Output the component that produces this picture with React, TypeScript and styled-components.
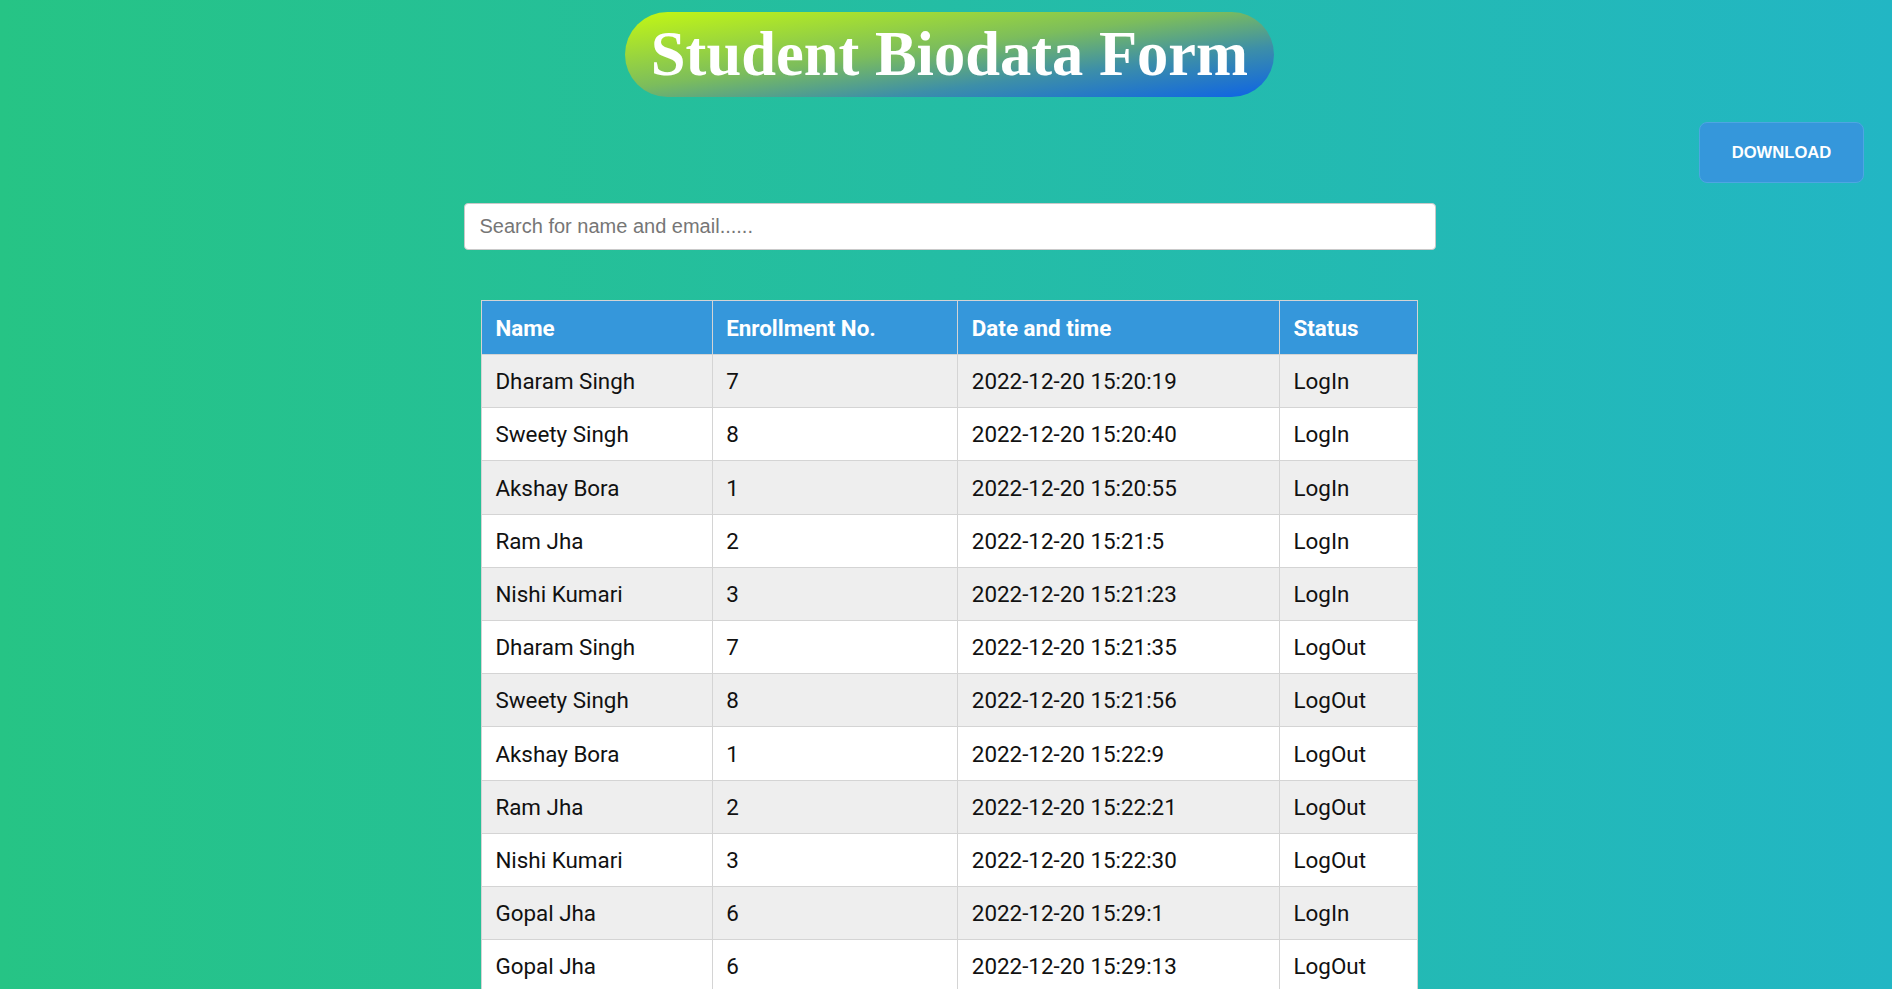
import React from "react";
import styled, { createGlobalStyle } from "styled-components";

const GlobalStyle = createGlobalStyle`
  html, body {
    margin: 0;
    padding: 0;
  }
  body {
    min-height: 100vh;
    background: linear-gradient(to right, #26c485, #22b6c4);
    font-family: Roboto, "Liberation Sans", sans-serif;
  }
`;

const Page = styled.div`
  display: flex;
  flex-direction: column;
  align-items: stretch;
  padding: 12px 0 40px 7px;
`;

const TitleRow = styled.header`
  display: flex;
  justify-content: center;
`;

const Title = styled.h1`
  margin: 0;
  height: 85px;
  padding: 0 26px;
  border-radius: 43px;
  background: linear-gradient(to bottom right, #c4f812, #7cbd5c 45%, #3d8fa8 70%, #0d63e6);
  color: #ffffff;
  font-family: "Liberation Serif", "Times New Roman", serif;
  font-weight: 700;
  font-size: 62.5px;
  line-height: 85px;
  white-space: nowrap;
`;

const ActionRow = styled.div`
  display: flex;
  justify-content: flex-end;
  padding-right: 28px;
  margin-top: 25px;
`;

const DownloadButton = styled.button`
  width: 165px;
  height: 61px;
  border: 1px solid #4ea6e2;
  border-radius: 8px;
  background: #3597db;
  color: #ffffff;
  font-family: "Liberation Sans", Arial, sans-serif;
  font-weight: 700;
  font-size: 16.6px;
  cursor: pointer;
`;

const SearchRow = styled.div`
  display: flex;
  justify-content: center;
  margin-top: 20px;
`;

const SearchInput = styled.input`
  box-sizing: border-box;
  width: 972px;
  height: 47px;
  padding: 0 15px;
  border: 1px solid #c9c9c9;
  border-radius: 4px;
  background: #ffffff;
  font-family: "Liberation Sans", Arial, sans-serif;
  font-size: 20px;
  color: #222;
  outline: none;
  &::placeholder {
    color: #767676;
  }
`;

const TableWrap = styled.div`
  display: flex;
  justify-content: center;
  margin-top: 50px;
`;

const Table = styled.table`
  width: 937px;
  border-collapse: collapse;
  border: 1px solid #d4d4d4;
  font-family: Roboto, "Liberation Sans", sans-serif;
  font-size: 22.4px;
`;

const HeadCell = styled.th<{ $w: number }>`
  width: ${(p) => p.$w}px;
  box-sizing: border-box;
  height: 54px;
  padding: 0 13.4px;
  background: #3597db;
  color: #ffffff;
  font-weight: 700;
  text-align: left;
  border: 1px solid #d4d4d4;
  line-height: 26px;
`;

const Row = styled.tr`
  background: #ffffff;
  &:nth-child(odd) {
    background: #eeeeee;
  }
`;

const Cell = styled.td`
  padding: 13.2px 13.4px 13px;
  line-height: 26px;
  color: #111111;
  border: 1px solid #d4d4d4;
  text-align: left;
  white-space: nowrap;
`;

type Entry = { name: string; no: number; time: string; status: string };

const entries: Entry[] = [
  { name: "Dharam Singh", no: 7, time: "2022-12-20 15:20:19", status: "LogIn" },
  { name: "Sweety Singh", no: 8, time: "2022-12-20 15:20:40", status: "LogIn" },
  { name: "Akshay Bora", no: 1, time: "2022-12-20 15:20:55", status: "LogIn" },
  { name: "Ram Jha", no: 2, time: "2022-12-20 15:21:5", status: "LogIn" },
  { name: "Nishi Kumari", no: 3, time: "2022-12-20 15:21:23", status: "LogIn" },
  { name: "Dharam Singh", no: 7, time: "2022-12-20 15:21:35", status: "LogOut" },
  { name: "Sweety Singh", no: 8, time: "2022-12-20 15:21:56", status: "LogOut" },
  { name: "Akshay Bora", no: 1, time: "2022-12-20 15:22:9", status: "LogOut" },
  { name: "Ram Jha", no: 2, time: "2022-12-20 15:22:21", status: "LogOut" },
  { name: "Nishi Kumari", no: 3, time: "2022-12-20 15:22:30", status: "LogOut" },
  { name: "Gopal Jha", no: 6, time: "2022-12-20 15:29:1", status: "LogIn" },
  { name: "Gopal Jha", no: 6, time: "2022-12-20 15:29:13", status: "LogOut" },
];

export default function App() {
  return (
    <>
      <GlobalStyle />
      <Page>
        <TitleRow>
          <Title>Student Biodata Form</Title>
        </TitleRow>
        <ActionRow>
          <DownloadButton>DOWNLOAD</DownloadButton>
        </ActionRow>
        <SearchRow>
          <SearchInput placeholder="Search for name and email......" />
        </SearchRow>
        <TableWrap>
          <Table>
            <thead>
              <tr>
                <HeadCell $w={231}>Name</HeadCell>
                <HeadCell $w={246}>Enrollment No.</HeadCell>
                <HeadCell $w={322}>Date and time</HeadCell>
                <HeadCell $w={138}>Status</HeadCell>
              </tr>
            </thead>
            <tbody>
              {entries.map((e, i) => (
                <Row key={i}>
                  <Cell>{e.name}</Cell>
                  <Cell>{e.no}</Cell>
                  <Cell>{e.time}</Cell>
                  <Cell>{e.status}</Cell>
                </Row>
              ))}
            </tbody>
          </Table>
        </TableWrap>
      </Page>
    </>
  );
}
